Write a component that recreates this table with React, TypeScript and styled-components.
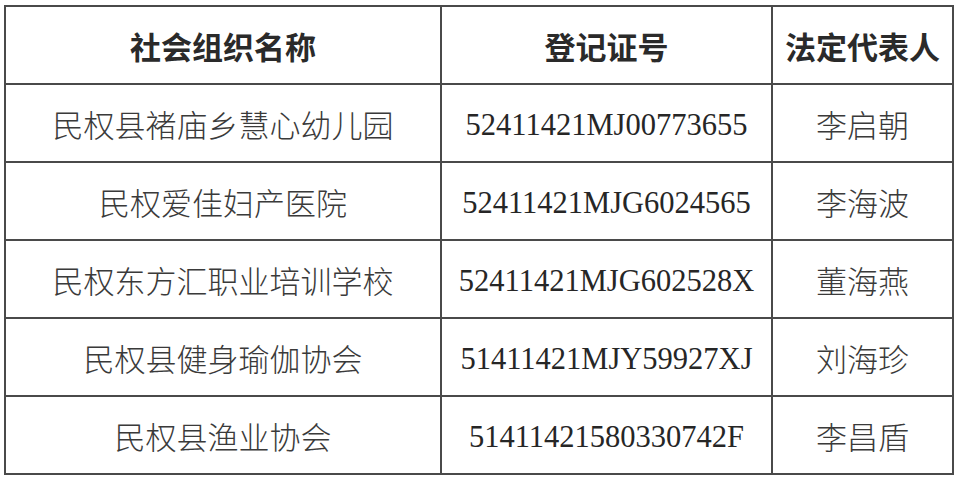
import React from "react";
import styled, { createGlobalStyle } from "styled-components";

const GlobalStyle = createGlobalStyle`
  html, body {
    margin: 0;
    padding: 0;
    background: #ffffff;
  }
`;

const Page = styled.div`
  padding: 5px 0 0 4px;
  width: 960px;
  height: 481px;
  box-sizing: border-box;
`;

const Table = styled.table`
  border-collapse: collapse;
  table-layout: fixed;
  width: 948px;
  border: 2px solid #4a4a4a;
`;

const Col = styled.col<{ w: number }>`
  width: ${(p) => p.w}px;
`;

const HeadCell = styled.th`
  height: 76px;
  padding: 0;
  border: 2px solid #4a4a4a;
  font-family: "Noto Sans CJK SC", "Noto Sans", sans-serif;
  font-size: 31px;
  font-weight: 700;
  color: #2a2a2a;
  text-align: center;
  vertical-align: middle;
`;

const Cell = styled.td<{ serif?: boolean }>`
  height: ${(p) => (p.serif ? "72px" : "76px")};
  padding: ${(p) => (p.serif ? "4px 0 0" : "0")};
  border: 2px solid #4a4a4a;
  text-align: center;
  vertical-align: middle;
  white-space: nowrap;
  font-family: ${(p) =>
    p.serif
      ? `"Liberation Serif", "Noto Sans CJK SC", serif`
      : `"Noto Sans CJK SC", sans-serif`};
  font-size: ${(p) => (p.serif ? "30.5px" : "31px")};
  font-weight: ${(p) => (p.serif ? 400 : 300)};
  color: ${(p) => (p.serif ? "#262626" : "#3a3a3a")};
`;

interface Org {
  name: string;
  code: string;
  rep: string;
}

const orgs: Org[] = [
  { name: "民权县褚庙乡慧心幼儿园", code: "52411421MJ00773655", rep: "李启朝" },
  { name: "民权爱佳妇产医院", code: "52411421MJG6024565", rep: "李海波" },
  { name: "民权东方汇职业培训学校", code: "52411421MJG602528X", rep: "董海燕" },
  { name: "民权县健身瑜伽协会", code: "51411421MJY59927XJ", rep: "刘海珍" },
  { name: "民权县渔业协会", code: "51411421580330742F", rep: "李昌盾" },
];

export default function App() {
  return (
    <>
      <GlobalStyle />
      <Page>
        <Table>
          <colgroup>
            <Col w={436} />
            <Col w={331} />
            <Col w={181} />
          </colgroup>
          <thead>
            <tr>
              <HeadCell>社会组织名称</HeadCell>
              <HeadCell>登记证号</HeadCell>
              <HeadCell>法定代表人</HeadCell>
            </tr>
          </thead>
          <tbody>
            {orgs.map((o) => (
              <tr key={o.code}>
                <Cell>{o.name}</Cell>
                <Cell serif>{o.code}</Cell>
                <Cell>{o.rep}</Cell>
              </tr>
            ))}
          </tbody>
        </Table>
      </Page>
    </>
  );
}
